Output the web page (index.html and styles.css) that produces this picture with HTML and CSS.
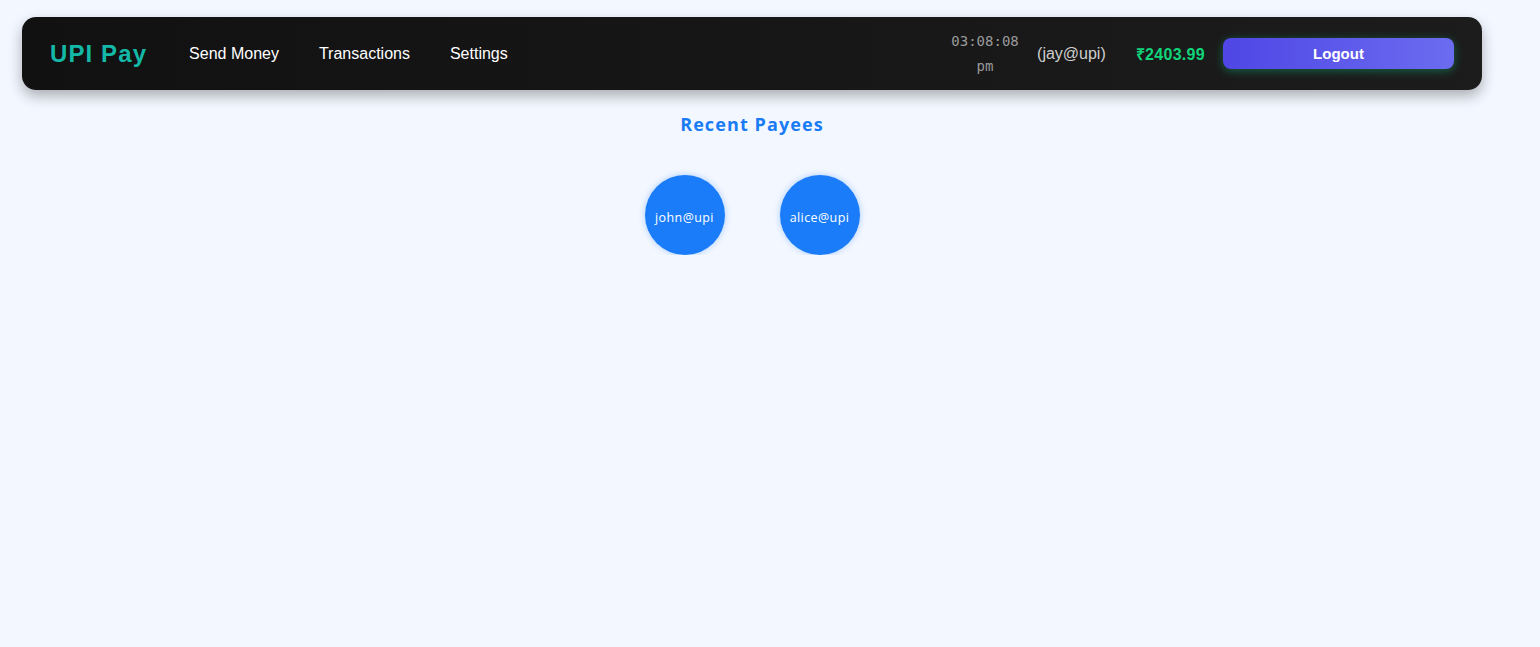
FILE: index.html
```html
<!DOCTYPE html>
<html>
<head>
<meta charset="utf-8">
<link rel="stylesheet" href="styles.css">
</head>
<body>
<div class="app">
  <nav class="navbar">
    <div class="nav-left">
      <span class="logo">UPI Pay</span>
      <a class="nav-link">Send Money</a>
      <a class="nav-link">Transactions</a>
      <a class="nav-link">Settings</a>
    </div>
    <div class="nav-right">
      <span class="clock">03:08:08 pm</span>
      <span class="upi-id">(jay@upi)</span>
      <span class="balance">₹2403.99</span>
      <button class="logout">Logout</button>
    </div>
  </nav>
  <section class="payees">
    <h2 class="payees-title">Recent Payees</h2>
    <div class="payee-list">
      <div class="payee">john@upi</div>
      <div class="payee">alice@upi</div>
    </div>
  </section>
</div>
</body>
</html>
```

FILE: styles.css
```css
html, body {
  margin: 0;
  padding: 0;
  background: #f3f7ff;
  font-family: "Liberation Sans", Arial, sans-serif;
}
.app {
  width: 1460px;
  margin-left: 22px;
  padding-top: 17px;
}
.navbar {
  height: 73px;
  box-sizing: border-box;
  display: flex;
  align-items: center;
  justify-content: space-between;
  padding: 0 28px 0 28px;
  background: linear-gradient(90deg, #111111, #1c1c1c);
  border-radius: 14px;
  box-shadow: 0 6px 14px rgba(0, 0, 0, 0.3);
}
.nav-left {
  display: flex;
  align-items: center;
  gap: 40px;
}
.logo {
  color: #14b8a6;
  font-size: 24px;
  font-weight: bold;
  letter-spacing: 1.1px;
  margin-right: 2px;
}
.nav-link {
  color: #ffffff;
  font-size: 16px;
}
.nav-right {
  display: flex;
  align-items: center;
}
.clock {
  width: 68px;
  text-align: center;
  font-family: "DejaVu Sans Mono", "Liberation Mono", monospace;
  font-size: 14px;
  line-height: 25px;
  color: #9a9a9a;
  margin-right: 18px;
  margin-top: 0px;
}
.upi-id {
  color: #cfcfcf;
  font-size: 16px;
  margin-right: 30px;
}
.balance {
  color: #10d47a;
  font-size: 16px;
  font-weight: bold;
  letter-spacing: 0.3px;
  margin-right: 18px;
}
.logout {
  width: 231px;
  height: 31px;
  border: none;
  border-radius: 8px;
  background: linear-gradient(90deg, #4f46e5, #6b6cf0);
  color: #ffffff;
  font-family: "Liberation Sans", Arial, sans-serif;
  font-size: 15px;
  font-weight: bold;
  box-shadow: 0 2px 10px rgba(16, 185, 129, 0.45);
}
.payees {
  display: flex;
  flex-direction: column;
  align-items: center;
}
.payees-title {
  margin: 22px 0 0 0;
  font-family: "Open Sans", "Noto Sans", sans-serif;
  font-size: 18px;
  font-weight: bold;
  letter-spacing: 1.1px;
  color: #1a7cf5;
  line-height: 24px;
}
.payee-list {
  display: flex;
  gap: 55px;
  margin-top: 39px;
}
.payee {
  width: 80px;
  height: 80px;
  border-radius: 50%;
  background: #1a7cf8;
  color: #ffffff;
  font-family: "Open Sans", "Noto Sans", sans-serif;
  font-size: 12.5px;
  letter-spacing: 0.4px;
  display: flex;
  align-items: center;
  justify-content: center;
  padding-top: 4px;
  box-sizing: border-box;
  box-shadow: 0 0 6px rgba(26, 124, 248, 0.35);
}
```
